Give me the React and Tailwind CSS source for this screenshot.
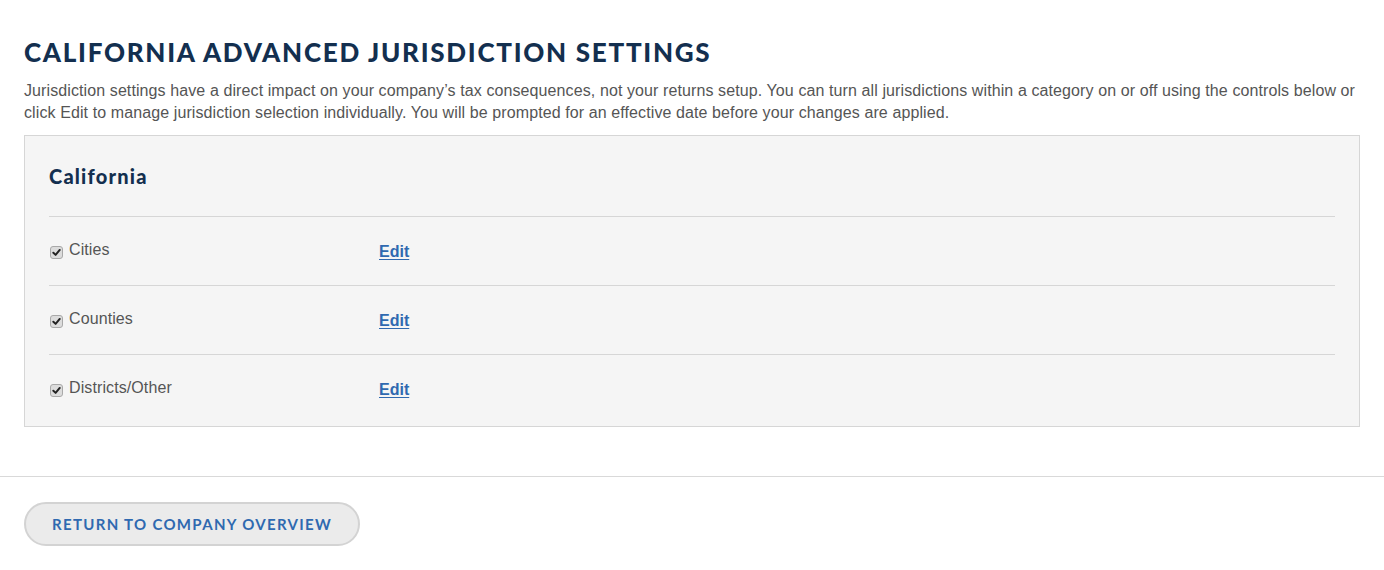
import React from "react";

function Check() {
  return (
    <span className="mt-[3px] inline-flex h-[13px] w-[13px] shrink-0 items-center justify-center rounded-[3px] border border-[#a9a9a9] bg-[#dcdcdc]">
      <svg width="9" height="9" viewBox="0 0 10 10">
        <path d="M1.5 5.2 L4 7.6 L8.6 2.2" fill="none" stroke="#222222" strokeWidth="2.2" strokeLinecap="round" strokeLinejoin="round" />
      </svg>
    </span>
  );
}

function Row({ label }) {
  return (
    <div className="grid h-[69px] grid-cols-[330px_1fr] items-center border-t border-[#d6d6d6]">
      <label className="flex items-center gap-[6px] pl-px text-[16px] tracking-[0.1px] text-[#555555]">
        <Check />
        <span className="-mt-[2px]">{label}</span>
      </label>
      <a href="#" className="mt-px text-[16px] font-bold text-[#2f69b0] underline underline-offset-2">
        Edit
      </a>
    </div>
  );
}

export default function App() {
  return (
    <div className="min-h-[570px] bg-white" style={{ fontFamily: '"Liberation Sans", Arial, sans-serif' }}>
      <div className="px-6 pt-[36px]">
        <h1
          className="text-[26px] font-black uppercase leading-[32px] tracking-[0.066em] text-[#132f4f]"
          style={{ fontFamily: 'Lato, "Open Sans", sans-serif' }}
        >
          California Advanced Jurisdiction Settings
        </h1>
        <p className="mt-[12px] text-[16px] leading-[22px] tracking-[0.1px] text-[#555555]">
          Jurisdiction settings have a direct impact on your company’s tax consequences, not your returns setup. You can turn all jurisdictions within a category on or off using the controls below or click Edit to manage jurisdiction selection individually. You will be prompted for an effective date before your changes are applied.
        </p>
        <div className="mt-[11px] border border-[#d6d6d6] bg-[#f5f5f5] px-6 pb-[3px] pt-[24px]">
          <h2
            className="text-[20px] font-black leading-[32px] tracking-[0.06em] text-[#132f4f]"
            style={{ fontFamily: 'Lato, "Open Sans", sans-serif' }}
          >
            California
          </h2>
          <div className="mt-[24px]">
            <Row label="Cities" />
            <Row label="Counties" />
            <Row label="Districts/Other" />
          </div>
        </div>
      </div>
      <div className="mt-[49px] border-t border-[#d9d9d9] px-6 pt-[25px]">
        <button
          className="h-[44px] rounded-full border-2 border-[#d3d3d3] bg-[#ebebeb] px-[26px] text-[15px] font-bold uppercase tracking-[0.088em] text-[#2f69b0]"
          style={{ fontFamily: 'Lato, "Open Sans", sans-serif' }}
        >
          Return to Company Overview
        </button>
      </div>
    </div>
  );
}
